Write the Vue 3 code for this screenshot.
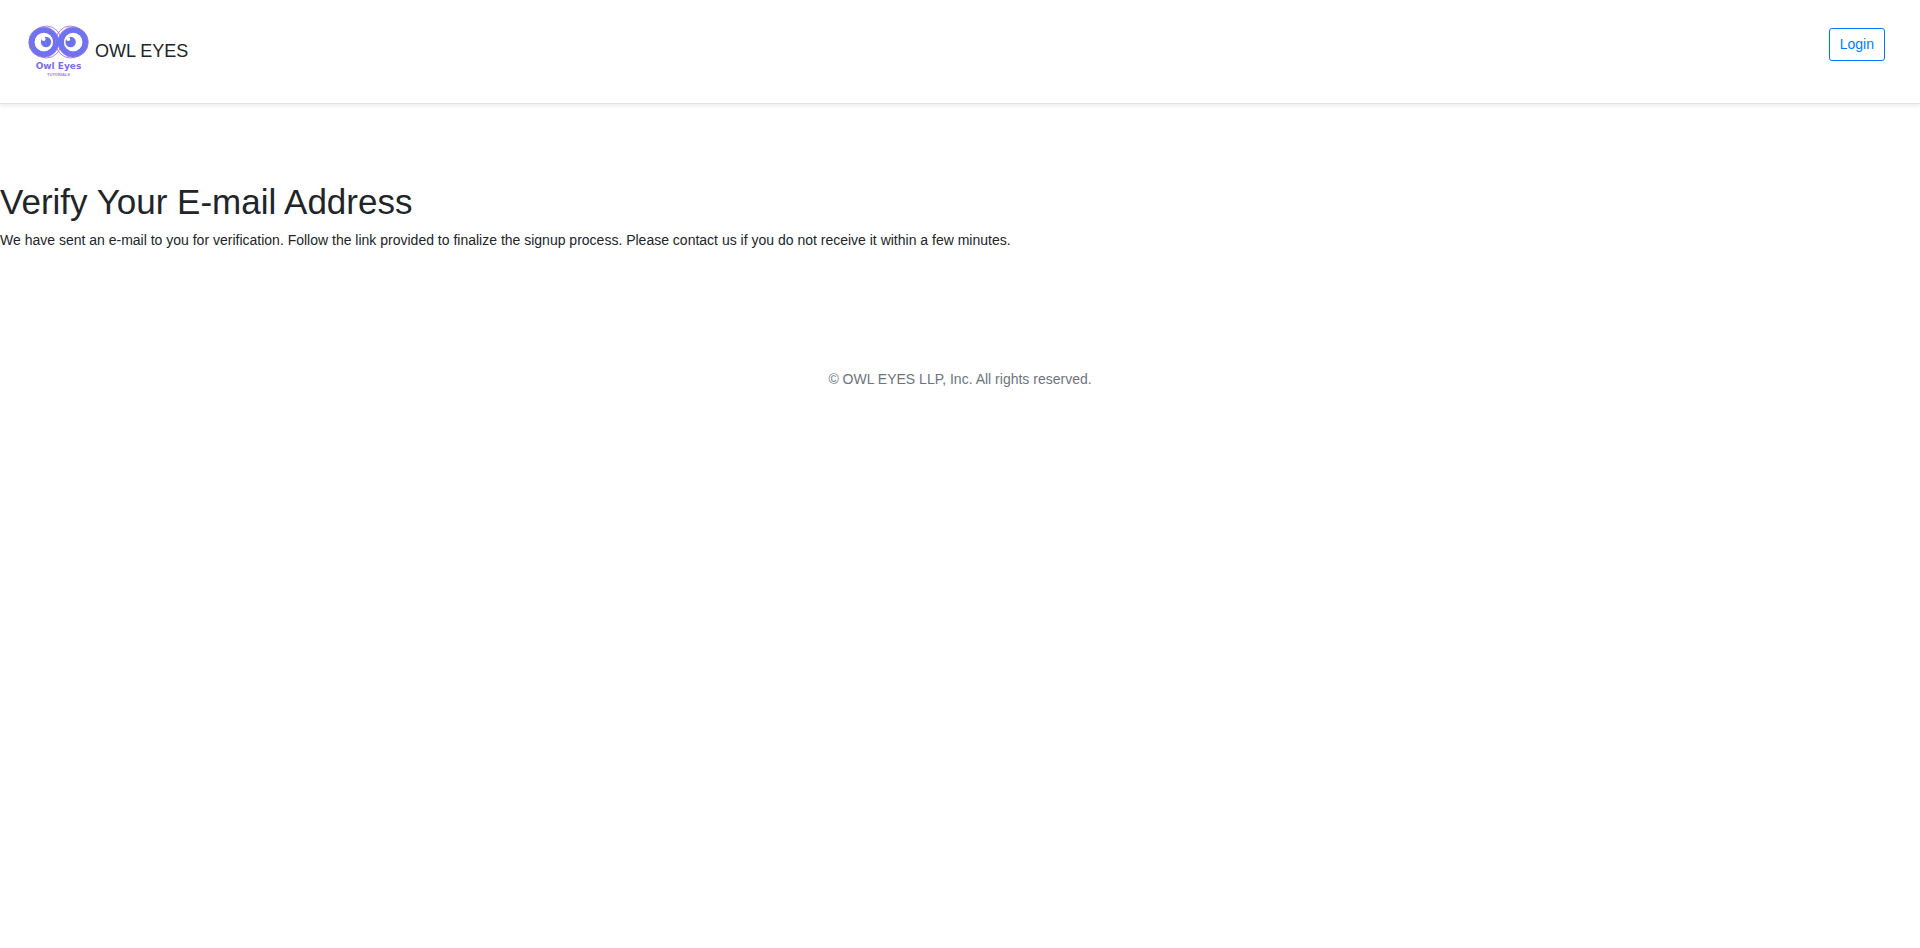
<script setup>
const eyes = [
  { id: 'left', x: 18.8, pupil: 21, halo: 21.5 },
  { id: 'right', x: 48.2, pupil: 45.6, halo: 45.5 },
]
</script>

<template>
  <div class="page">
    <header class="bar">
      <a class="brand" href="#">
        <svg class="logo" width="66" height="60" viewBox="0 -1 66 60" role="img" aria-label="Owl Eyes Tutorials">
          <g v-for="eye in eyes" :key="eye.id">
            <ellipse :cx="eye.halo" cy="20" rx="15" ry="16" fill="none" stroke="#9a70ee" stroke-width="1" opacity="0.85" />
            <circle :cx="eye.x" cy="20.2" r="12" fill="none" stroke="#6f74ee" stroke-width="6" />
            <circle :cx="eye.x" cy="20.2" r="15.1" fill="none" stroke="#9a70ee" stroke-width="0.8" />
          </g>
          <path d="M29 11 L33.5 16 L38 11 L35.5 20 L38 29 L33.5 24 L29 29 L31.5 20 Z" fill="#6f74ee" />
          <g v-for="eye in eyes" :key="eye.id + '-pupil'">
            <circle :cx="eye.x" cy="20" r="9.2" fill="#fff" />
            <circle :cx="eye.pupil" cy="20" r="5.2" fill="#6b72ea" />
            <circle :cx="eye.pupil - 2.4" cy="17" r="2" fill="#fff" />
          </g>
          <text class="logo-name" x="33.5" y="47" text-anchor="middle">Owl Eyes</text>
          <text class="logo-sub" x="33.5" y="54" text-anchor="middle">TUTORIALS</text>
        </svg>
        <span class="title">OWL EYES</span>
      </a>
      <a class="login" href="#">Login</a>
    </header>

    <main class="content">
      <h1>Verify Your E-mail Address</h1>
      <p>
        We have sent an e-mail to you for verification. Follow the link provided to finalize the signup process.
        Please contact us if you do not receive it within a few minutes.
      </p>
    </main>

    <footer class="footer">© OWL EYES LLP, Inc. All rights reserved.</footer>
  </div>
</template>

<style>
body {
  margin: 0;
  background: #fff;
}
</style>

<style scoped>
.page {
  font-family: "Liberation Sans", Arial, sans-serif;
  font-size: 14px;
  line-height: 21px;
  color: #212529;
}
.bar {
  display: flex;
  align-items: flex-start;
  justify-content: space-between;
  padding: 21px 35px 22px 25px;
  border-bottom: 1px solid #dee2e6;
  box-shadow: 0 2px 4px rgba(0, 0, 0, 0.075);
}
.brand {
  display: flex;
  align-items: center;
  gap: 4px;
  color: inherit;
  text-decoration: none;
}
.logo {
  display: block;
}
.logo-name {
  font-family: "DejaVu Sans", sans-serif;
  font-size: 9px;
  font-weight: 700;
  fill: #7d6cf2;
}
.logo-sub {
  font-family: "Liberation Sans", Arial, sans-serif;
  font-size: 4px;
  font-weight: 700;
  fill: #9a7cf3;
}
.title {
  font-size: 18px;
}
.login {
  margin-top: 7px;
  padding: 5px 10px;
  border: 1px solid #007bff;
  border-radius: 3px;
  color: #007bff;
  text-decoration: none;
}
.content {
  padding-top: 77px;
}
h1 {
  margin: 0 0 7px;
  font-size: 35px;
  font-weight: 500;
  line-height: 42px;
}
p {
  margin: 0;
}
.footer {
  margin-top: 118px;
  padding-bottom: 42px;
  text-align: center;
  color: #6c757d;
}
</style>
